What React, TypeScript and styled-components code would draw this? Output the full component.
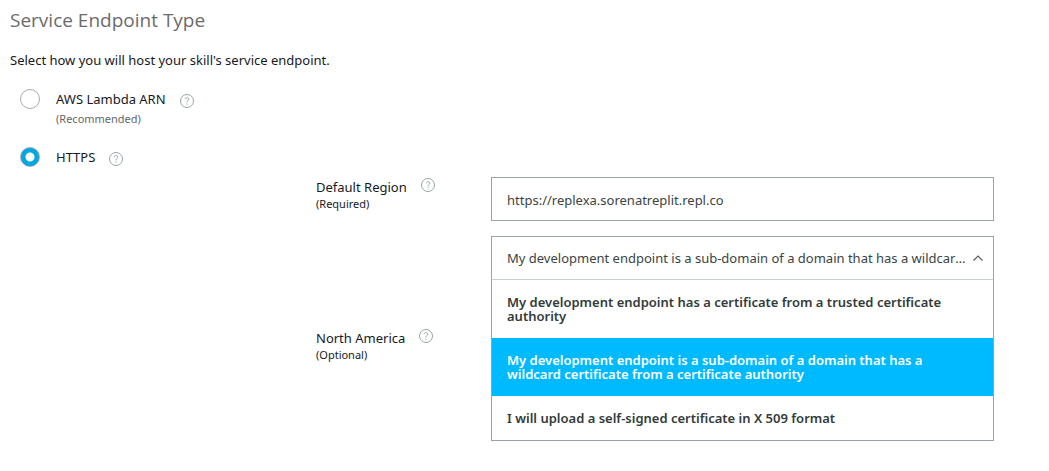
import React, { useId, useState } from 'react';
import styled, { createGlobalStyle } from 'styled-components';

const GlobalStyle = createGlobalStyle`
  *, *::before, *::after { box-sizing: border-box; }
  body {
    margin: 0;
    background: #fff;
    color: #16191f;
    font-family: 'Noto Sans', 'Open Sans', sans-serif;
    font-size: 13px;
    line-height: 20px;
  }
`;

const Page = styled.main`
  min-height: 100vh;
  padding: 6px 10px 0;
`;

const Title = styled.h2`
  margin: 0;
  color: #6b6b6b;
  font-family: 'Open Sans', sans-serif;
  font-size: 19px;
  font-weight: 400;
  line-height: 28px;
`;

const Intro = styled.p`
  margin: 16px 0 0;
`;

const Choices = styled.div`
  display: flex;
  flex-direction: column;
  gap: 18px;
  padding: 19px 10px 0;
`;

const Choice = styled.div`
  display: flex;
  align-items: flex-start;
  gap: 16px;
`;

const Radio = styled.input`
  appearance: none;
  flex: none;
  width: 20px;
  height: 20px;
  margin: 0;
  border: 1px solid #a9a9b3;
  border-radius: 50%;
  background: #fff;

  &:checked {
    background: radial-gradient(circle, #fff 4px, #00a8e1 5px);
  }
`;

const ChoiceText = styled.div`
  display: flex;
  flex-direction: column;
`;

const LabelLine = styled.div<{ $help: 'low' | 'high' }>`
  display: flex;
  align-items: ${(p) => (p.$help === 'low' ? 'flex-end' : 'flex-start')};
  gap: 14px;
  height: 20px;
`;

const Hint = styled.span<{ $muted?: boolean }>`
  color: ${(p) => (p.$muted ? '#666' : 'inherit')};
  font-size: 11px;
  line-height: ${(p) => (p.$muted ? '20px' : '14px')};
`;

const HelpButton = styled.button`
  display: flex;
  padding: 1px 0;
  border: 0;
  background: none;
  cursor: pointer;
`;

const Regions = styled.div`
  display: flex;
  flex-direction: column;
  padding: 10px 45px 0 306px;
`;

const Region = styled.section`
  display: grid;
  grid-template-columns: 175px minmax(0, 1fr);
  align-items: start;
  padding-bottom: 48px;
`;

const RegionLabel = styled.div`
  display: flex;
  flex-direction: column;
`;

const Fields = styled.div`
  display: flex;
  flex-direction: column;
  gap: 15px;
`;

const UrlInput = styled.input`
  width: 100%;
  height: 44px;
  padding: 2px 15px 0;
  border: 1px solid #95a5a6;
  border-radius: 0;
  background: #fff;
  color: #3a4444;
  font: inherit;
`;

const Dropdown = styled.div`
  position: relative;
`;

const SelectBox = styled.div`
  display: grid;
  grid-template-columns: minmax(0, 1fr) 10px;
  align-items: center;
  height: 44px;
  padding-right: 10px;
  border: 1px solid #95a5a6;
  border-bottom-color: #c5cfcf;
`;

const Select = styled.select`
  appearance: none;
  width: 100%;
  height: 42px;
  padding: 0 0 0 15px;
  border: 0;
  outline: 0;
  background: transparent;
  color: #3a4444;
  font: inherit;
  overflow: hidden;
  text-overflow: ellipsis;
  white-space: nowrap;
`;

const Chevron = styled.svg<{ $open: boolean }>`
  transform: ${(p) => (p.$open ? 'none' : 'rotate(180deg)')};
  pointer-events: none;
`;

const Menu = styled.ul`
  position: absolute;
  z-index: 1;
  top: 100%;
  left: 0;
  right: 0;
  margin: 0;
  padding: 0;
  border: 1px solid #95a5a6;
  border-top: 0;
  background: #fff;
  list-style: none;
`;

const MenuItem = styled.li<{ $active: boolean }>`
  padding: 15px;
  background: ${(p) => (p.$active ? '#00baff' : '#fff')};
  color: ${(p) => (p.$active ? '#fff' : '#333b3b')};
  font-weight: 600;
  line-height: 14px;
  cursor: pointer;
`;

const certificates = [
  'My development endpoint has a certificate from a trusted certificate authority',
  'My development endpoint is a sub-domain of a domain that has a wildcard certificate from a certificate authority',
  'I will upload a self-signed certificate in X 509 format',
];

function Help({ topic }: { topic: string }) {
  return (
    <HelpButton type="button" aria-label={`Help: ${topic}`}>
      <svg width="14" height="14" viewBox="0 0 14 14" fill="none" stroke="#95a5a6">
        <circle cx="7" cy="7" r="6.5" />
        <path d="M5.2 5.2C5.3 4.100 6 3.6 7 3.6s1.800.6 1.800 1.500c0 1.300-1.800 1.400-1.800 3.200" />
        <path d="M7 9.400v1.200" />
      </svg>
    </HelpButton>
  );
}

function CertificateSelect() {
  const [value, setValue] = useState(certificates[1]);
  const [open, setOpen] = useState(true);
  return (
    <Dropdown>
      <SelectBox>
        <Select
          aria-label="Certificate type"
          value={value}
          onChange={(e) => setValue(e.target.value)}
          onMouseDown={(e) => {
            e.preventDefault();
            setOpen(!open);
          }}
        >
          {certificates.map((c) => (
            <option key={c}>{c}</option>
          ))}
        </Select>
        <Chevron $open={open} width="10" height="6" viewBox="0 0 10 6" fill="none" stroke="#555f5f" strokeWidth="1.2" aria-hidden="true">
          <path d="M.5 5.500 5 1l4.500 4.500" />
        </Chevron>
      </SelectBox>
      {open && (
        <Menu role="listbox" aria-label="Certificate type">
          {certificates.map((c) => (
            <MenuItem
              key={c}
              role="option"
              aria-selected={c === value}
              $active={c === value}
              onClick={() => {
                setValue(c);
                setOpen(false);
              }}
            >
              {c}
            </MenuItem>
          ))}
        </Menu>
      )}
    </Dropdown>
  );
}

function RegionHeading({ name, hint, htmlFor }: { name: string; hint: string; htmlFor?: string }) {
  return (
    <RegionLabel>
      <LabelLine $help="high">
        {htmlFor ? <label htmlFor={htmlFor}>{name}</label> : <span>{name}</span>}
        <Help topic={name} />
      </LabelLine>
      <Hint>{hint}</Hint>
    </RegionLabel>
  );
}

export default function App() {
  const [type, setType] = useState('https');
  const urlId = useId();
  return (
    <>
      <GlobalStyle />
      <Page>
        <Title>Service Endpoint Type</Title>
        <Intro>Select how you will host your skill's service endpoint.</Intro>
        <Choices>
          <Choice>
            <Radio id="lambda" type="radio" name="endpoint" checked={type === 'lambda'} onChange={() => setType('lambda')} />
            <ChoiceText>
              <LabelLine $help="low">
                <label htmlFor="lambda">AWS Lambda ARN</label>
                <Help topic="AWS Lambda ARN" />
              </LabelLine>
              <Hint $muted>(Recommended)</Hint>
            </ChoiceText>
          </Choice>
          <Choice>
            <Radio id="https" type="radio" name="endpoint" checked={type === 'https'} onChange={() => setType('https')} />
            <LabelLine $help="low">
              <label htmlFor="https">HTTPS</label>
              <Help topic="HTTPS" />
            </LabelLine>
          </Choice>
        </Choices>
        <Regions>
          <Region>
            <RegionHeading name="Default Region" hint="(Required)" htmlFor={urlId} />
            <Fields>
              <UrlInput id={urlId} type="url" defaultValue="https://replexa.sorenatreplit.repl.co" />
              <CertificateSelect />
            </Fields>
          </Region>
          <RegionHeading name="North America" hint="(Optional)" />
        </Regions>
      </Page>
    </>
  );
}
